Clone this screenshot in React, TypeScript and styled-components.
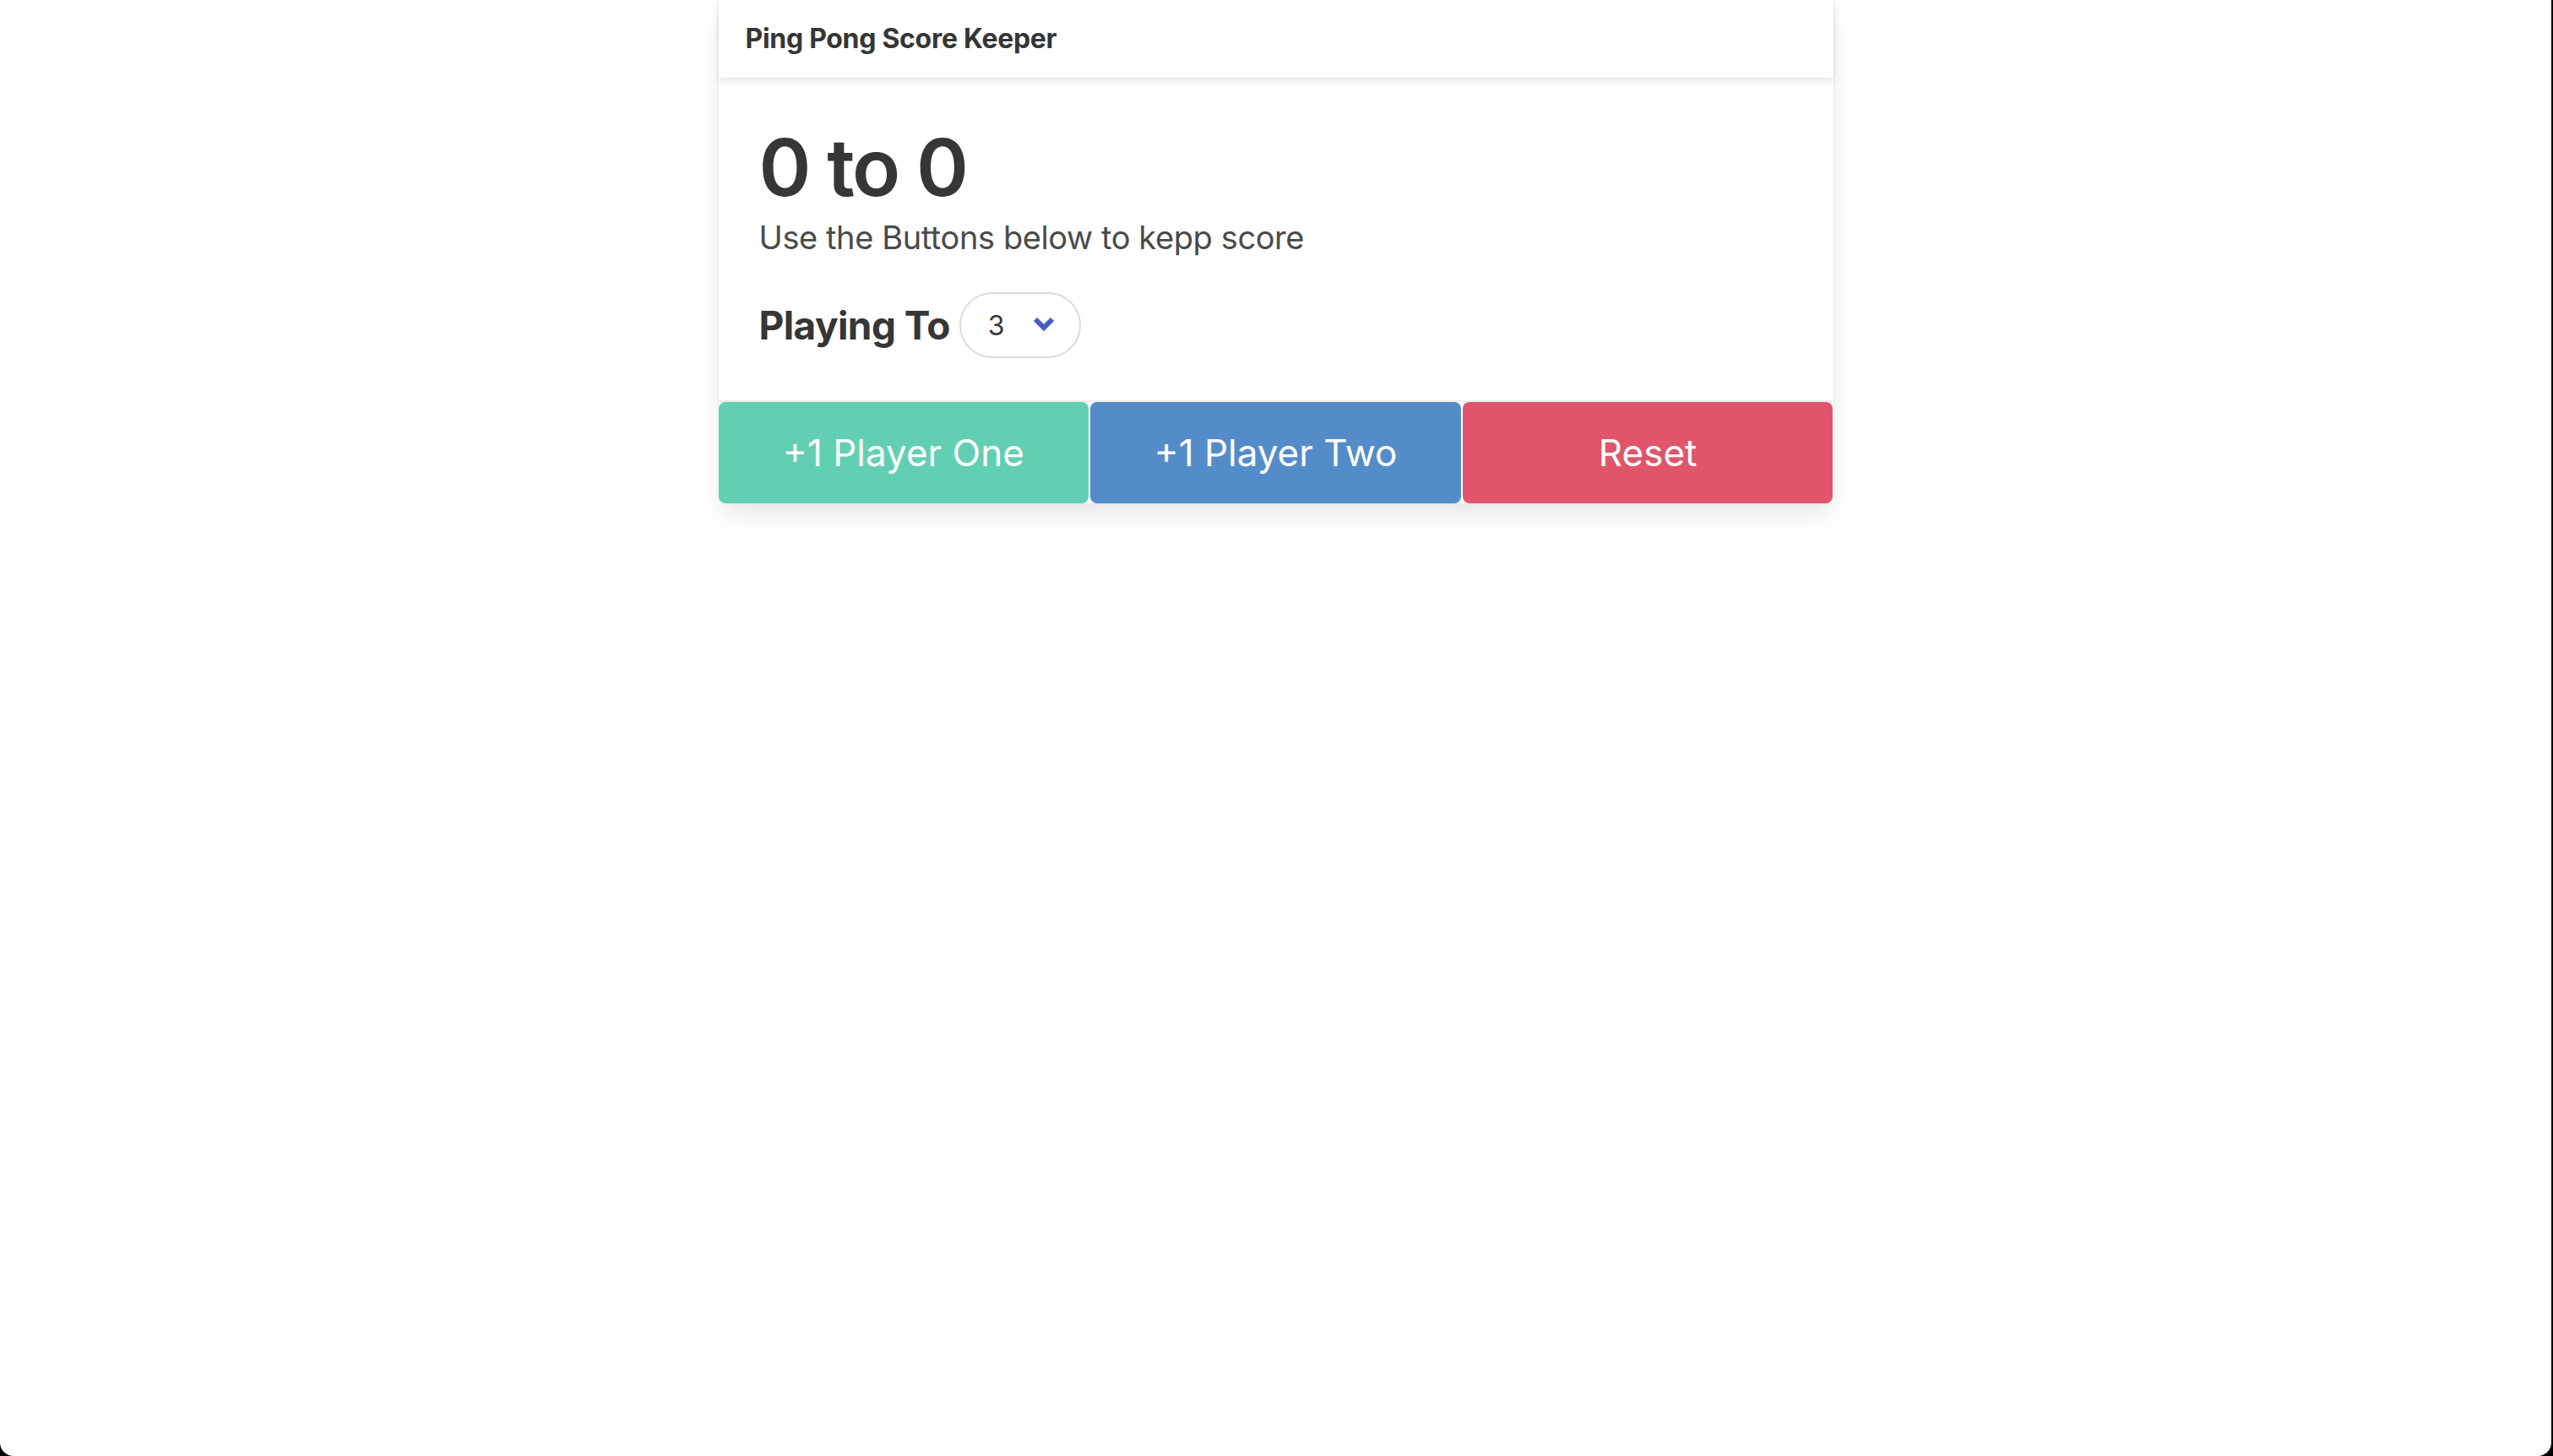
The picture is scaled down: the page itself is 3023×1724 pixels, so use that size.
import React, { useState } from "react";
import styled, { createGlobalStyle } from "styled-components";

const GlobalStyle = createGlobalStyle`
  html, body {
    margin: 0;
    padding: 0;
    background: #000;
  }
  body {
    font-family: Inter, "Noto Sans", "Liberation Sans", sans-serif;
    color: #363636;
  }
  * { box-sizing: border-box; }
`;

const Screen = styled.div`
  width: calc(100vw - 2px);
  height: 100vh;
  background: #ffffff;
  border-bottom-left-radius: 16px;
  border-bottom-right-radius: 16px;
  overflow: hidden;
`;

const Card = styled.div`
  width: 1320px;
  margin: 0 auto;
  background: #fff;
  border-radius: 0 0 8px 8px;
  box-shadow: 0 16px 32px -4px rgba(10, 10, 10, 0.1), 0 0 0 2px rgba(10, 10, 10, 0.02);
`;

const Header = styled.header`
  height: 92px;
  display: flex;
  align-items: center;
  padding: 0 32px;
  box-shadow: 0 4px 8px rgba(10, 10, 10, 0.1);
`;

const HeaderTitle = styled.h1`
  margin: 0;
  font-size: 32px;
  font-weight: 700;
  letter-spacing: -0.3px;
  color: #363636;
  line-height: 48px;
`;

const Content = styled.section`
  padding: 52px 48px 50px;
`;

const Score = styled.h2`
  margin: 0;
  font-size: 94px;
  font-weight: 600;
  letter-spacing: -2.5px;
  line-height: 108px;
  color: #363636;
`;

const Subtitle = styled.p`
  margin: 4px 0 0;
  font-size: 38px;
  line-height: 50px;
  font-weight: 400;
  letter-spacing: -0.4px;
  color: #4a4a4a;
`;

const SettingRow = styled.div`
  margin-top: 40px;
  display: flex;
  align-items: center;
  gap: 11px;
`;

const SettingLabel = styled.h3`
  margin: 0;
  font-size: 46px;
  font-weight: 700;
  letter-spacing: -0.6px;
  line-height: 60px;
  color: #363636;
`;

const SelectWrap = styled.div`
  position: relative;
  width: 144px;
  height: 78px;
`;

const Select = styled.select`
  appearance: none;
  -webkit-appearance: none;
  width: 100%;
  height: 100%;
  border: 2px solid #dbdbdb;
  border-radius: 39px;
  background: #fff;
  padding: 0 0 0 32px;
  font-family: Inter, "Noto Sans", sans-serif;
  font-size: 32px;
  color: #363636;
  outline: none;
  cursor: pointer;
`;

const Chevron = styled.svg`
  position: absolute;
  right: 30px;
  top: 27px;
  width: 28px;
  height: 22px;
  pointer-events: none;
`;

const Footer = styled.footer`
  display: grid;
  grid-template-columns: repeat(3, 1fr);
  gap: 2px;
  border-top: 2px solid #ededed;
`;

const ScoreButton = styled.button<{ $bg: string }>`
  height: 120px;
  border: none;
  border-radius: 8px;
  background: ${(p) => p.$bg};
  color: #fff;
  font-family: Inter, "Noto Sans", sans-serif;
  font-size: 44px;
  font-weight: 400;
  cursor: pointer;
`;

export default function App() {
  const [p1, setP1] = useState(0);
  const [p2, setP2] = useState(0);
  const [target, setTarget] = useState(3);

  return (
    <>
      <GlobalStyle />
      <Screen>
        <Card>
          <Header>
            <HeaderTitle>Ping Pong Score Keeper</HeaderTitle>
          </Header>
          <Content>
            <Score>
              {p1} to {p2}
            </Score>
            <Subtitle>Use the Buttons below to kepp score</Subtitle>
            <SettingRow>
              <SettingLabel>Playing To</SettingLabel>
              <SelectWrap>
                <Select value={target} onChange={(e) => setTarget(Number(e.target.value))}>
                  {[3, 4, 5, 6, 7, 8, 9, 10, 11].map((n) => (
                    <option key={n} value={n}>
                      {n}
                    </option>
                  ))}
                </Select>
                <Chevron viewBox="0 0 28 22">
                  <polyline
                    points="4,5 14,15 24,5"
                    fill="none"
                    stroke="#4a5bc5"
                    strokeWidth="6"
                    strokeLinejoin="miter"
                  />
                </Chevron>
              </SelectWrap>
            </SettingRow>
          </Content>
          <Footer>
            <ScoreButton $bg="#62cfb3" onClick={() => setP1(p1 + 1)}>
              +1 Player One
            </ScoreButton>
            <ScoreButton $bg="#548cca" onClick={() => setP2(p2 + 1)}>
              +1 Player Two
            </ScoreButton>
            <ScoreButton
              $bg="#e0556b"
              onClick={() => {
                setP1(0);
                setP2(0);
              }}
            >
              Reset
            </ScoreButton>
          </Footer>
        </Card>
      </Screen>
    </>
  );
}
